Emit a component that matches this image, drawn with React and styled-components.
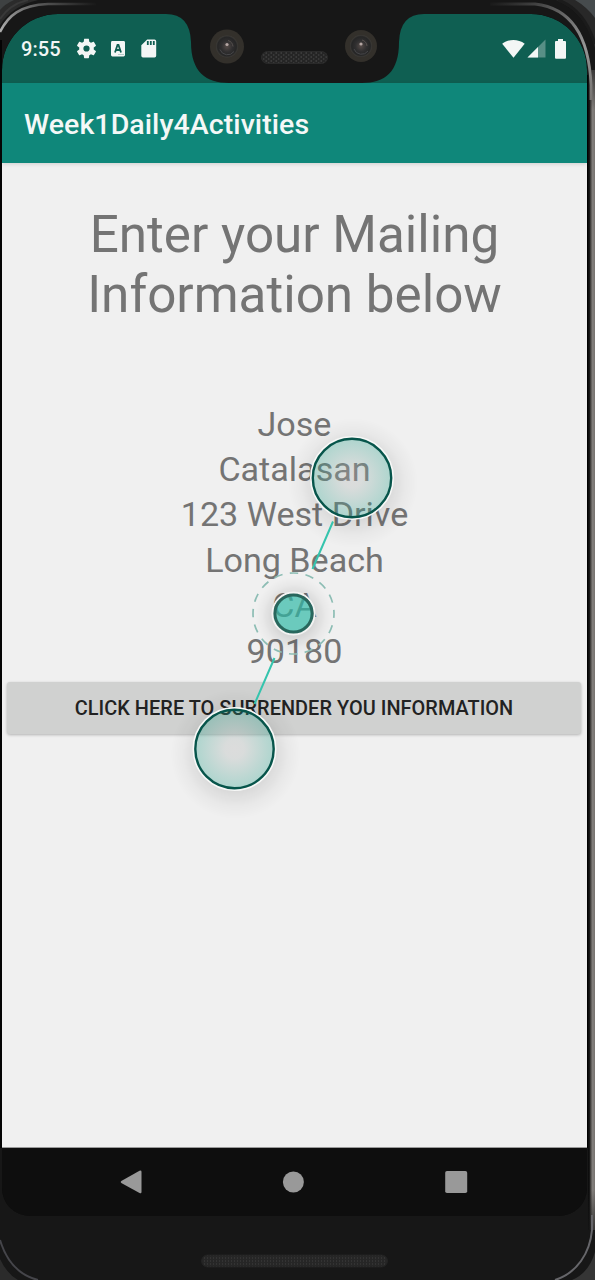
import React from "react";
import styled, { createGlobalStyle, css } from "styled-components";

const Global = createGlobalStyle`
  * { box-sizing: border-box; }
  html, body { margin: 0; padding: 0; background: #171717; }
  body { font-family: Roboto, "Liberation Sans", sans-serif; overflow: hidden; }
`;

const Phone = styled.div`
  position: relative;
  width: 595px;
  height: 1280px;
  padding: 14px 8px 0 2px;
  overflow: hidden;
  background: #171717;
`;

const Bezel = styled.svg`
  position: absolute;
  left: 0;
  top: 0;
  pointer-events: none;
`;

const Screen = styled.div`
  position: relative;
  display: flex;
  flex-direction: column;
  width: 585px;
  height: 1202px;
  border-radius: 56px 56px 28px 28px;
  overflow: hidden;
  background: #0e0e0e;
`;

const StatusBar = styled.header`
  display: flex;
  align-items: center;
  justify-content: space-between;
  height: 69px;
  padding: 0 21px 0 19px;
  border-radius: 56px 56px 0 0;
  background: #0f5f52;
`;

const StatusGroup = styled.div`
  display: flex;
  align-items: center;
`;

const Clock = styled.span`
  width: 41px;
  margin-right: 14px;
  padding-top: 1px;
  color: #f2f6f5;
  font-size: 20px;
  font-weight: 500;
  line-height: 24px;
  letter-spacing: 0.1px;
  white-space: nowrap;
`;

const AppBar = styled.div`
  position: relative;
  display: flex;
  align-items: center;
  height: 80px;
  padding: 4px 22px 0;
  background: #0f877a;
  box-shadow: 0 1px 4px rgba(0, 0, 0, 0.14);
`;

const AppTitle = styled.h1`
  margin: 0;
  color: #f4f8f7;
  font-size: 28.5px;
  font-weight: 500;
  line-height: 34px;
  letter-spacing: 0.08px;
  white-space: nowrap;
`;

const Content = styled.main`
  display: flex;
  flex: 1;
  flex-direction: column;
  padding: 42px 5px 0;
  border-bottom: 1px solid #9a9a9a;
  background: #f0f0f0;
`;

const Heading = styled.h2`
  margin: 0 0 76.6px;
  color: #747474;
  font-size: 51.2px;
  font-weight: 400;
  line-height: 60px;
  text-align: center;
`;

const AddressLine = styled.p`
  margin: 0;
  color: #747474;
  font-size: 34.1px;
  line-height: 45.4px;
  text-align: center;
`;

const SubmitButton = styled.button`
  height: 52px;
  margin: 8px 1px 0 0;
  padding: 1px 0 0;
  border: 0;
  border-radius: 3px;
  background: #d0d1d0;
  box-shadow: 0 1px 3px rgba(0, 0, 0, 0.26);
  color: #222;
  font: 500 19.9px/52px Roboto, "Liberation Sans", sans-serif;
  letter-spacing: 0.05px;
  text-transform: uppercase;
`;

const NavBar = styled.nav`
  display: flex;
  align-items: center;
  justify-content: space-between;
  height: 68px;
  padding: 0 119.3px 0 116.7px;
  background: #0e0e0e;
`;

const NavIcon = styled.svg`
  display: block;
  width: 24px;
  height: 24px;
  fill: #999;
`;

const Overlay = styled.svg`
  position: absolute;
  left: 145px;
  top: 400px;
  pointer-events: none;
`;

const Glyph = styled.svg`
  display: block;
  fill: #f3f6f5;
  ${(p) => p.$offset && css`margin-left: ${p.$offset};`}
`;

const ADDRESS = ["Jose", "Catalasan", "123 West Drive", "Long Beach", "CA", "90180"];

function StatusIcons() {
  return (
    <>
      <Glyph width="21" height="21" viewBox="1.2 1.2 21.6 21.6">
        <path d="M19.43 12.98c.04-.32.07-.64.07-.98s-.03-.66-.07-.98l2.11-1.65c.19-.15.24-.42.12-.64l-2-3.46c-.12-.22-.39-.3-.61-.22l-2.49 1c-.52-.4-1.08-.73-1.69-.98l-.38-2.65C14.46 2.18 14.25 2 14 2h-4c-.25 0-.46.18-.49.42l-.38 2.65c-.61.25-1.17.59-1.69.98l-2.49-1c-.23-.09-.49 0-.61.22l-2 3.46c-.13.22-.07.49.12.64l2.11 1.65c-.04.32-.07.65-.07.98s.03.66.07.98l-2.11 1.65c-.19.15-.24.42-.12.64l2 3.46c.12.22.39.3.61.22l2.49-1c.52.4 1.08.73 1.69.98l.38 2.65c.03.24.24.42.49.42h4c.25 0 .46-.18.49-.42l.38-2.65c.61-.25 1.17-.59 1.69-.98l2.49 1c.23.09.49 0 .61-.22l2-3.46c.12-.22.07-.49-.12-.64l-2.11-1.65zM12 15.2a3.2 3.2 0 1 1 0-6.4 3.2 3.2 0 0 1 0 6.4z" />
      </Glyph>
      <Glyph width="15" height="16" viewBox="0 0 15 16" $offset="14px">
        <rect width="14" height="15.4" rx="1.4" />
        <path d="M4 11.5 6.5 4h1l2.5 7.5M5 9h4" fill="none" stroke="#0f5f52" strokeWidth="1.8" />
        <path d="M7 13.5h6" stroke="#b4cbc8" strokeWidth="1" />
      </Glyph>
      <Glyph width="16" height="19" viewBox="0 0 16 19" $offset="15px">
        <path d="M6.2.5H13.5a1.7 1.7 0 0 1 1.7 1.7v14.6a1.7 1.7 0 0 1-1.7 1.7H2A1.7 1.7 0 0 1 .3 16.8V6.3z" />
        <path d="M6.800 2v4M9.800 2v4M12.800 2v4" stroke="#0f5f52" strokeWidth="1.800" />
      </Glyph>
    </>
  );
}

function SignalIcons() {
  return (
    <>
      <Glyph width="23" height="20" viewBox="0 0 23 20">
        <path d="M.2 4.800C6.500-.2 16.200-.2 22.700 4.800L11.500 18.800z" />
      </Glyph>
      <Glyph width="19" height="19" viewBox="0 0 19 19" $offset="2px">
        <path d="M18.500.500V18.500H.500z" fillOpacity=".32" />
        <path d="M11 8v10.500H.500z" />
      </Glyph>
      <Glyph width="11" height="20" viewBox="0 0 11 20" $offset="9px">
        <path d="M3 0h5v2H10a1 1 0 0 1 1 1v15.700a1 1 0 0 1-1 1H1a1 1 0 0 1-1-1V3a1 1 0 0 1 1-1h2z" />
      </Glyph>
    </>
  );
}

function DeviceFrame() {
  return (
    <Bezel width="595" height="1280" viewBox="0 0 595 1280">
      <defs>
        <linearGradient id="edge" gradientUnits="userSpaceOnUse" x1="587" y1="0" x2="595" y2="0">
          <stop offset="0" stopColor="#030303" />
          <stop offset=".3" stopColor="#141414" />
          <stop offset=".5" stopColor="#55524f" />
          <stop offset=".7" stopColor="#83807d" />
          <stop offset="1" stopColor="#77736f" />
        </linearGradient>
        <linearGradient id="edgeEnd" x1="0" y1="0" x2="0" y2="1">
          <stop offset="0" stopColor="#171717" />
          <stop offset=".05" stopColor="#171717" stopOpacity="0" />
          <stop offset=".95" stopColor="#171717" stopOpacity="0" />
          <stop offset="1" stopColor="#171717" />
        </linearGradient>
        <linearGradient id="rimL" gradientUnits="userSpaceOnUse" x1="96" y1="0" x2="0" y2="33">
          <stop offset="0" stopColor="#555" stopOpacity="0" />
          <stop offset=".55" stopColor="#5a5a5a" />
          <stop offset=".8" stopColor="#858585" />
          <stop offset="1" stopColor="#b0b0b0" />
        </linearGradient>
        <linearGradient id="rimR" gradientUnits="userSpaceOnUse" x1="490" y1="0" x2="592" y2="100">
          <stop offset="0" stopColor="#555" stopOpacity="0" />
          <stop offset=".4" stopColor="#606060" />
          <stop offset=".7" stopColor="#969696" />
          <stop offset="1" stopColor="#777471" />
        </linearGradient>
        <pattern id="mesh" width="5" height="4" patternUnits="userSpaceOnUse">
          <rect width="5" height="4" fill="#252525" />
          <circle cx="1.200" cy="1" r=".8" fill="#494949" />
          <circle cx="3.700" cy="3" r=".8" fill="#434343" />
        </pattern>
        <pattern id="meshLow" width="3" height="3" patternUnits="userSpaceOnUse">
          <rect width="3" height="3" fill="#262626" />
          <rect width="1" height="2" fill="#333" />
        </pattern>
        <radialGradient id="lens">
          <stop offset="0" stopColor="#554b48" />
          <stop offset=".5" stopColor="#302f30" />
          <stop offset=".85" stopColor="#262626" />
          <stop offset="1" stopColor="#3d3b38" />
        </radialGradient>
      </defs>

      <rect x="587" y="75" width="1.500" height="1073" fill="#020202" />
      <rect x="588" y="70" width="7" height="1160" fill="url(#edge)" />
      <rect x="588" y="50" width="7" height="1200" fill="url(#edgeEnd)" />
      <rect x="0" y="40" width="2" height="1108" fill="#040404" />

      <path d="M0 0H38Q12 6 0 25z" fill="#2b2b2b" />
      <path d="M0 0H14Q5 4 0 10z" fill="#3e4142" />
      <path d="M0 19Q10 4 28 0" fill="none" stroke="#393939" strokeWidth="2" />
      <path d="M0 32C8 16 20 5 48 4H96" fill="none" stroke="url(#rimL)" strokeWidth="2.500" />

      <path d="M595 0H556Q586 12 595 48z" fill="#282828" />
      <path d="M595 0H575Q587 7 595 18z" fill="#464b4d" />
      <path d="M558 0Q584 9 595 44" fill="none" stroke="#1b1b1b" strokeWidth="3" />
      <path d="M490 4H535C571 8 589 35 591 85V100" fill="none" stroke="url(#rimR)" strokeWidth="2.800" />

      <path d="M0 1240Q10 1273 38 1280" fill="none" stroke="#45454a" strokeWidth="2" />
      <path d="M0 1259Q7 1274 18 1280H0z" fill="#2b2b2b" />
      <path d="M595 1232Q592 1268 557 1280H595z" fill="#171717" />
      <path d="M592 1215V1230C590 1253 577 1273 555 1280" fill="none" stroke="#66666a" strokeWidth="2" />
      <path d="M595 1252Q589 1273 572 1280H595z" fill="#353535" />

      <path
        d="M166 14Q190 14 191 42C191 72 206 83 229 83H362C385 83 399 72 399 42Q400 14 424 14V12H166z"
        fill="#171717"
      />
      {[
        [227, 46.500, 17],
        [361, 46, 16],
      ].map(([x, y, r]) => (
        <g key={x}>
          <circle cx={x} cy={y} r={r} fill="#33302b" />
          <circle cx={x} cy={y} r="11" fill="url(#lens)" />
          <path d={`M${x - 7} ${y + 3}a8 8 0 0 0 14 2`} fill="none" stroke="#47474a" />
          <path d={`M${x + 1} ${y - 6}a7 7 0 0 1 5 6`} fill="none" stroke="#56504d" />
          <circle cx={x} cy={y - 2} r="1.600" fill="#b5a7a4" />
        </g>
      ))}
      <rect x="261.500" y="51.500" width="66" height="12" rx="6" fill="url(#mesh)" stroke="#2a2a2a" />
      <rect x="201.500" y="1255" width="186" height="12" rx="6" fill="url(#meshLow)" stroke="#222" />
    </Bezel>
  );
}

function PinchGesture() {
  return (
    <Overlay width="300" height="450" viewBox="145 400 300 450">
      <defs>
        <radialGradient id="touch">
          <stop offset="0" stopColor="#adadad" stopOpacity=".3" />
          <stop offset=".25" stopColor="#a4adab" stopOpacity=".3" />
          <stop offset="1" stopColor="#1b9982" stopOpacity=".31" />
        </radialGradient>
        <radialGradient id="halo">
          <stop offset="0" stopColor="#000" stopOpacity=".12" />
          <stop offset=".55" stopColor="#000" stopOpacity=".1" />
          <stop offset=".8" stopColor="#000" stopOpacity=".03" />
          <stop offset="1" stopColor="#000" stopOpacity="0" />
        </radialGradient>
        <mask id="outside" maskUnits="userSpaceOnUse" x="145" y="400" width="300" height="450">
          <rect x="145" y="400" width="300" height="450" fill="#fff" />
          <circle cx="352" cy="478" r="40" fill="#000" />
          <circle cx="234.500" cy="749" r="40" fill="#000" />
          <circle cx="293.500" cy="613.500" r="20" fill="#000" />
        </mask>
      </defs>
      <g fill="url(#halo)" mask="url(#outside)">
        <circle cx="353" cy="483" r="65" />
        <circle cx="235.500" cy="754" r="65" />
        <circle cx="294" cy="616" r="39" />
      </g>
      <circle cx="293.500" cy="613.500" r="40.500" fill="none" stroke="#8dbdb4" strokeWidth="1.700" strokeDasharray="8.500 7.400" strokeDashoffset="4" />
      <path d="M333 521.500 312.500 569M274.500 658 254.500 704" stroke="#35c4ad" strokeWidth="2" />
      {[
        [352, 478],
        [234.500, 749],
      ].map(([x, y]) => (
        <g key={x}>
          <circle cx={x} cy={y} r="39" fill="url(#touch)" />
          <circle cx={x} cy={y} r="41" fill="none" stroke="#f7f8f7" strokeWidth="2" />
          <circle cx={x} cy={y} r="39.200" fill="none" stroke="#07554b" strokeWidth="2.400" />
        </g>
      ))}
      <circle cx="293.500" cy="613.500" r="19" fill="#2cb8a5" fillOpacity=".68" />
      <circle cx="293.500" cy="613.500" r="21" fill="none" stroke="#f2f3f2" strokeWidth="2" />
      <circle cx="293.500" cy="613.500" r="18.600" fill="none" stroke="#28675d" strokeWidth="3" />
    </Overlay>
  );
}

export default function App() {
  return (
    <>
      <Global />
      <Phone>
        <Screen>
          <StatusBar>
            <StatusGroup>
              <Clock>9:55</Clock>
              <StatusIcons />
            </StatusGroup>
            <StatusGroup>
              <SignalIcons />
            </StatusGroup>
          </StatusBar>
          <AppBar>
            <AppTitle>Week1Daily4Activities</AppTitle>
          </AppBar>
          <Content>
            <Heading>
              Enter your Mailing
              <br />
              Information below
            </Heading>
            {ADDRESS.map((line) => (
              <AddressLine key={line}>{line}</AddressLine>
            ))}
            <SubmitButton type="button">Click here to surrender you information</SubmitButton>
          </Content>
          <NavBar>
            <NavIcon viewBox="0 0 24 24">
              <path d="M22 .8Q24 0 24 2V22Q24 24 22 23L3.800 13Q2.500 12 3.800 11z" transform="translate(-1.500 0)" />
            </NavIcon>
            <NavIcon viewBox="0 0 24 24">
              <circle cx="12.400" cy="12" r="10.500" />
            </NavIcon>
            <NavIcon viewBox="0 0 24 24">
              <rect x="1.200" y="1" width="22" height="22" rx="1.800" />
            </NavIcon>
          </NavBar>
        </Screen>
        <DeviceFrame />
        <PinchGesture />
      </Phone>
    </>
  );
}
